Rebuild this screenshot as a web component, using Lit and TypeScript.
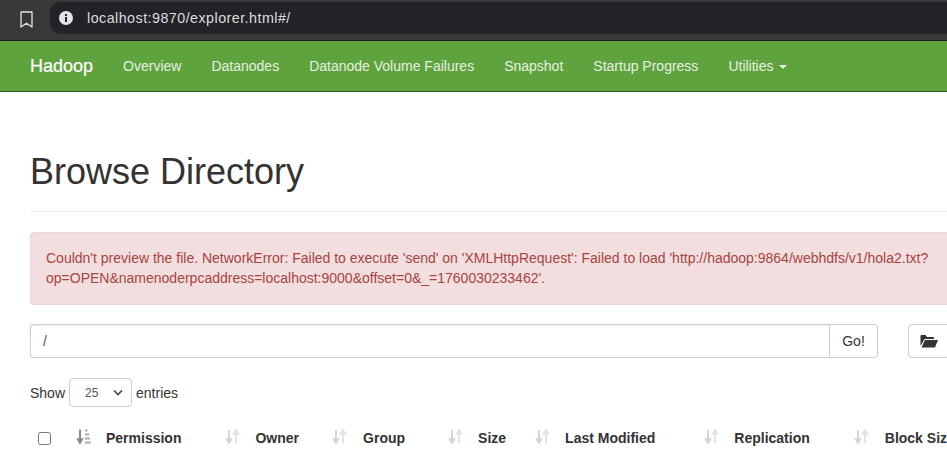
import { LitElement, html, css, svg } from "lit";
import { customElement } from "lit/decorators.js";

const sortIdle = svg`<svg class="sort" viewBox="0 0 15 15" width="15" height="15" aria-hidden="true">
  <path d="M4 1v12M1.800 10.200l2.200 3.800 2.200-3.800z" fill="#d6d6d6" stroke="#d6d6d6" stroke-width="2"/>
  <path d="M11 14V2M8.800 4.800L11 1l2.200 3.800z" fill="#e4e4e4" stroke="#e4e4e4" stroke-width="2"/>
</svg>`;
const sortActive = svg`<svg class="sort" viewBox="0 0 15 15" width="15" height="15" aria-hidden="true">
  <path d="M4 0.500v12.500M2 10.200l2 3.800 2-3.800z" fill="#8a8a8a" stroke="#8a8a8a" stroke-width="2"/>
  <path d="M9 1.500h2.500M9 5.500h4M9 9.500h5M9 13.500h6" fill="none" stroke="#aeaeae" stroke-width="2"/>
</svg>`;

const columns = [
  { label: "Permission", active: true },
  { label: "Owner", active: false },
  { label: "Group", active: false },
  { label: "Size", active: false },
  { label: "Last Modified", active: false },
  { label: "Replication", active: false },
  { label: "Block Size", active: false },
];

@customElement("app-root")
export class AppRoot extends LitElement {
  static styles = css`
    :host {
      display: block;
      width: 947px;
      height: 449px;
      overflow: hidden;
      background: #fff;
      font-family: "Liberation Sans", Arial, sans-serif;
      color: #333;
    }
    .chrome {
      height: 41px;
      background: #38383b;
      display: flex;
      align-items: center;
      padding-left: 20px;
      gap: 17px;
      box-sizing: border-box;
      border-bottom: 1px solid #1d1d1f;
    }
    .bookmark { flex: none; width: 13px; height: 17px; margin-bottom: 2px; }
    .url {
      flex: 1;
      height: 32px;
      margin-bottom: 5px;
      background: #232327;
      border-radius: 10px 0 0 10px;
      display: flex;
      align-items: center;
      gap: 14px;
      padding-left: 9px;
      color: #dcdcde;
      font-size: 14.3px;
      letter-spacing: 0.46px;
    }
    .info { width: 14px; height: 14px; flex: none; }
    .navbar {
      height: 51px;
      box-sizing: border-box;
      background: #5fa33e;
      border-bottom: 1px solid #2f5a20;
      display: flex;
      align-items: center;
      padding-left: 30px;
      font-size: 14px;
      color: #e6f0e0;
    }
    .brand { font-size: 18px; color: #fff; margin-right: 30px; -webkit-text-stroke: 0.2px #fff; }
    .nav { display: flex; gap: 30px; }
    .caret {
      display: inline-block;
      width: 0;
      height: 0;
      margin-left: 5px;
      vertical-align: middle;
      border-top: 4px solid #e6f0e0;
      border-left: 4px solid transparent;
      border-right: 4px solid transparent;
    }
    main { padding-left: 30px; }
    h1 {
      margin: 0;
      padding: 58px 0 17px;
      font-size: 36px;
      line-height: 44px;
      font-weight: 400;
      color: #333;
      border-bottom: 1px solid #eee;
    }
    .alert {
      margin-top: 20px;
      box-sizing: border-box;
      width: 950px;
      height: 73px;
      padding: 15px;
      background: #f2dede;
      border: 1px solid #ebd5d5;
      border-radius: 4px;
      color: #a94442;
      font-size: 14px;
      line-height: 20px;
    }
    .path { display: flex; margin-top: 19px; height: 34px; width: 950px; }
    .input {
      box-sizing: border-box;
      width: 799px;
      border: 1px solid #ccc;
      border-right: none;
      border-radius: 4px 0 0 4px;
      box-shadow: inset 0 1px 1px rgba(0,0,0,.075);
      padding: 0 12px;
      font-size: 14px;
      line-height: 32px;
      color: #555;
    }
    .btn {
      box-sizing: border-box;
      border: 1px solid #ccc;
      background: #fff;
      font-size: 14px;
      color: #333;
      display: flex;
      align-items: center;
      justify-content: center;
    }
    .go { width: 49px; border-radius: 0 4px 4px 0; }
    .folder { width: 42px; margin-left: 30px; border-radius: 4px; flex: none; }
    .folder svg { width: 18px; height: 14px; }
    .length {
      display: flex;
      align-items: center;
      margin-top: 20px;
      gap: 4px;
      font-size: 14px;
      height: 29px;
    }
    .select {
      box-sizing: border-box;
      width: 63px;
      height: 29px;
      border: 1px solid #ccc;
      border-radius: 4px;
      display: flex;
      align-items: center;
      justify-content: space-between;
      padding: 0 8px 0 15px;
      font-size: 12px;
      color: #555;
    }
    .select svg { width: 10px; height: 7px; }
    .thead {
      display: flex;
      align-items: center;
      margin-top: 21px;
      margin-left: 8px;
      height: 20px;
      font-size: 14px;
      font-weight: 700;
      white-space: nowrap;
      color: #333;
    }
    .check {
      box-sizing: border-box;
      flex: none;
      width: 13px;
      height: 13px;
      border: 1px solid #767676;
      border-radius: 2.5px;
      background: #fff;
    }
    .sort { flex: none; display: block; margin-top: -4px; }
    .s1 { margin-left: 25px; }
    .c1 { margin-left: 15px; }
    .s2 { margin-left: 44px; }
    .c2 { margin-left: 15px; }
    .s3 { margin-left: 33px; }
    .c3 { margin-left: 16px; }
    .s4 { margin-left: 43px; }
    .c4 { margin-left: 15px; }
    .s5 { margin-left: 29px; }
    .c5 { margin-left: 15px; }
    .s6 { margin-left: 49px; }
    .c6 { margin-left: 15px; }
    .s7 { margin-left: 44px; }
    .c7 { margin-left: 16px; }
    .sw { display: flex; }
  `;

  render() {
    return html`
      <div class="chrome">
        <svg class="bookmark" viewBox="0 0 13 17" aria-hidden="true">
          <path d="M1 1h11v15l-5.500-3.800L1 16z" fill="none" stroke="#e4e4e4" stroke-width="1.300" stroke-linejoin="round"/>
        </svg>
        <div class="url">
          <svg class="info" viewBox="0 0 14 14" aria-hidden="true">
            <circle cx="7" cy="7" r="7" fill="#e4e4e6"/>
            <rect x="6" y="6" width="2" height="5" fill="#232327"/>
            <rect x="6" y="3" width="2" height="2" fill="#232327"/>
          </svg>
          <span>localhost:9870/explorer.html#/</span>
        </div>
      </div>
      <nav class="navbar">
        <span class="brand">Hadoop</span>
        <div class="nav">
          <span>Overview</span>
          <span>Datanodes</span>
          <span>Datanode Volume Failures</span>
          <span>Snapshot</span>
          <span>Startup Progress</span>
          <span>Utilities<i class="caret"></i></span>
        </div>
      </nav>
      <main>
        <h1>Browse Directory</h1>
        <div class="alert">
          Couldn't preview the file. NetworkError: Failed to execute 'send' on 'XMLHttpRequest': Failed to load 'http://hadoop:9864/webhdfs/v1/hola2.txt?<br />op=OPEN&amp;namenoderpcaddress=localhost:9000&amp;offset=0&amp;_=1760030233462'.
        </div>
        <div class="path">
          <div class="input">/</div>
          <div class="btn go">Go!</div>
          <div class="btn folder">
            <svg viewBox="0 0 18 14" aria-hidden="true">
              <path d="M0.500 12V2a1 1 0 0 1 1-1h4l1.500 2h6a1 1 0 0 1 1 1v1H4.500z" fill="#333"/>
              <path d="M4.800 6H18l-3 7.500H1.500z" fill="#333"/>
            </svg>
          </div>
        </div>
        <div class="length">
          <span>Show</span>
          <div class="select">
            <span>25</span>
            <svg viewBox="0 0 10 7" aria-hidden="true"><path d="M1 1.500l4 4 4-4" fill="none" stroke="#444" stroke-width="1.600"/></svg>
          </div>
          <span>entries</span>
        </div>
        <div class="thead">
          <span class="check"></span>
          ${columns.map(
            (c, i) => html`
              <span class="sw s${i + 1}">${c.active ? sortActive : sortIdle}</span>
              <span class="c${i + 1}">${c.label}</span>
            `
          )}
        </div>
      </main>
    `;
  }
}
